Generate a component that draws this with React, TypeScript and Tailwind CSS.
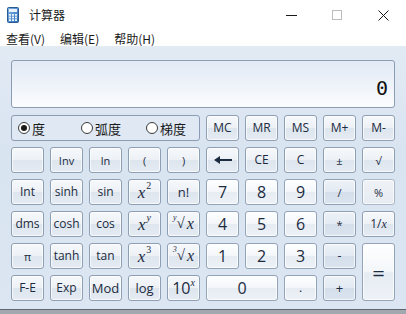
import React from "react";

type V = "fn" | "num" | "op" | "flat";

const base =
  "flex items-center justify-center rounded-[3px] border text-[#1c2b40] shadow-[inset_0_0_0_1px_rgba(255,255,255,0.7)]";

const variants: Record<V, string> = {
  fn: "border-[#8e9fb4] bg-[linear-gradient(to_bottom,#f6f8fb_0%,#edf1f6_48%,#dde5ee_52%,#e5ebf2_100%)]",
  num: "border-[#93a3b8] bg-[linear-gradient(to_bottom,#fdfeff_0%,#f4f7fa_48%,#e6ecf3_52%,#eef2f7_100%)]",
  op: "border-[#8e9fb4] bg-[linear-gradient(to_bottom,#edf2f7_0%,#e4eaf2_48%,#d4deea_52%,#dbe4ee_100%)]",
  flat: "border-[#a9b7c8] bg-[linear-gradient(to_bottom,#eef2f7_0%,#e7ecf2_100%)]",
};

function Btn({
  children,
  v = "fn",
  className = "",
  size = "text-[12px]",
}: {
  children?: React.ReactNode;
  v?: V;
  className?: string;
  size?: string;
}) {
  return (
    <div
      className={`${base} ${variants[v]} ${size} ${className} font-['Open_Sans','Noto_Sans',sans-serif] leading-none`}
    >
      {children}
    </div>
  );
}

const Ix = ({ children }: { children: React.ReactNode }) => (
  <span className="font-['Liberation_Serif',serif] italic">{children}</span>
);

function Pow({ b, e }: { b: React.ReactNode; e: React.ReactNode }) {
  return (
    <span className="flex items-start font-['Liberation_Serif',serif] text-[17px] leading-none">
      <span className="italic">{b}</span>
      <span className="text-[10px] -mt-[3px] ml-[1px]">{e}</span>
    </span>
  );
}

function Root({ n }: { n: React.ReactNode }) {
  return (
    <span className="flex items-start font-['Liberation_Serif',serif] leading-none">
      <span className="-mt-[2px] text-[8px] italic">{n}</span>
      <span className="text-[15px]">√</span>
      <span className="ml-[2px] text-[16px] italic">x</span>
    </span>
  );
}

function Radio({ on, label, className = "" }: { on?: boolean; label: string; className?: string }) {
  return (
    <div className={`flex items-center gap-[2px] ${className}`}>
      <span className="flex h-[12px] w-[12px] items-center justify-center rounded-full border border-[#3a3a3a] bg-white">
        {on && <span className="h-[6px] w-[6px] rounded-full bg-[#1a1a1a]" />}
      </span>
      <span className="text-[13px] leading-none text-[#1a1a1a]">{label}</span>
    </div>
  );
}

function CalcIcon() {
  return (
    <svg width="12" height="16" viewBox="0 0 12 16">
      <defs>
        <linearGradient id="cg" x1="0" y1="0" x2="1" y2="1">
          <stop offset="0" stopColor="#7fb2e6" />
          <stop offset="1" stopColor="#2f6eb5" />
        </linearGradient>
      </defs>
      <rect x="0.5" y="0.5" width="11" height="15" rx="1" fill="url(#cg)" stroke="#2a5a94" />
      <rect x="2" y="2" width="8" height="3" fill="#e8f1fa" />
      {[0, 1, 2].map((r) =>
        [0, 1, 2].map((c) => (
          <rect key={`${r}${c}`} x={2 + c * 3} y={7 + r * 2.6} width="2" height="1.8" fill="#eaf2fb" />
        ))
      )}
    </svg>
  );
}

export default function App() {
  return (
    <div className="flex h-[314px] w-[406px] flex-col overflow-hidden bg-white font-['Noto_Sans_CJK_SC','Noto_Sans',sans-serif]">
      {/* Title bar */}
      <div className="flex h-[30px] items-center">
        <div className="ml-[7px] mr-[10px] flex items-center">
          <CalcIcon />
        </div>
        <span className="text-[12px] text-[#1a1a1a]">计算器</span>
        <div className="ml-auto flex h-full items-center">
          <div className="flex w-[46px] items-center justify-center">
            <span className="h-px w-[11px] bg-[#1a1a1a]" />
          </div>
          <div className="flex w-[46px] items-center justify-center">
            <span className="h-[10px] w-[10px] border border-[#bcbcbc]" />
          </div>
          <div className="flex w-[46px] items-center justify-center">
            <svg width="11" height="11" viewBox="0 0 11 11">
              <path d="M0.5 0.5 L10.5 10.5 M10.5 0.5 L0.5 10.5" stroke="#1a1a1a" strokeWidth="1" />
            </svg>
          </div>
        </div>
      </div>
      {/* Menu */}
      <div className="flex h-[16px] items-center gap-[15px] px-[6px] pt-[2px] text-[12px] leading-none text-[#1a1a1a]">
        <span>查看(V)</span>
        <span>编辑(E)</span>
        <span>帮助(H)</span>
      </div>
      {/* Body */}
      <div className="flex flex-1 flex-col bg-[linear-gradient(to_bottom,#e2eaf4,#d9e4f1_40%,#dbe6f2)] px-[11px] pt-[14px]">
        <div className="flex h-[48px] items-end justify-end rounded-[3px] border border-[#8c9cb2] bg-[linear-gradient(to_bottom,#e2eaf6_0%,#edf2f9_45%,#fbfcfe_100%)] pb-[9px] pr-[6px]">
          <span className="font-['DejaVu_Sans_Mono',monospace] text-[20px] leading-none text-[#111]">0</span>
        </div>
        <div className="mt-[7px] grid grid-cols-[repeat(10,33px)] grid-rows-[repeat(6,26px)] gap-[6px]">
          <div className="col-span-5 flex items-center rounded-[3px] border border-[#8c9cb2] bg-[#dfe8f3] pl-[6px]">
            <Radio on label="度" />
            <Radio label="弧度" className="ml-[36px]" />
            <Radio label="梯度" className="ml-[25px]" />
          </div>
          <Btn>MC</Btn>
          <Btn>MR</Btn>
          <Btn>MS</Btn>
          <Btn>M+</Btn>
          <Btn>M-</Btn>

          <Btn />
          <Btn size="text-[11px]">Inv</Btn>
          <Btn size="text-[11px]">ln</Btn>
          <Btn size="text-[11px]">(</Btn>
          <Btn size="text-[11px]">)</Btn>
          <Btn>
            <svg width="18" height="8" viewBox="0 0 18 8">
              <path d="M0 4 L6 0 L6 8 Z" fill="#1c2b40" />
              <rect x="5" y="3" width="13" height="2" fill="#1c2b40" />
            </svg>
          </Btn>
          <Btn>CE</Btn>
          <Btn>C</Btn>
          <Btn size="text-[11px]">±</Btn>
          <Btn size="text-[11px]">√</Btn>

          <Btn>Int</Btn>
          <Btn>sinh</Btn>
          <Btn>sin</Btn>
          <Btn><Pow b="x" e="2" /></Btn>
          <Btn size="text-[13px]">n!</Btn>
          <Btn v="num" size="text-[16px]">7</Btn>
          <Btn v="num" size="text-[16px]">8</Btn>
          <Btn v="num" size="text-[16px]">9</Btn>
          <Btn v="op" size="text-[11px]">/</Btn>
          <Btn v="flat" size="text-[11px]">%</Btn>

          <Btn>dms</Btn>
          <Btn>cosh</Btn>
          <Btn>cos</Btn>
          <Btn><Pow b="x" e={<span className="italic">y</span>} /></Btn>
          <Btn><Root n="y" /></Btn>
          <Btn v="num" size="text-[16px]">4</Btn>
          <Btn v="num" size="text-[16px]">5</Btn>
          <Btn v="num" size="text-[16px]">6</Btn>
          <Btn v="op" size="text-[11px]">*</Btn>
          <Btn v="fn" size="text-[12px]">
            1/<Ix>x</Ix>
          </Btn>

          <Btn size="text-[11px]">π</Btn>
          <Btn>tanh</Btn>
          <Btn>tan</Btn>
          <Btn><Pow b="x" e="3" /></Btn>
          <Btn><Root n="3" /></Btn>
          <Btn v="num" size="text-[16px]">1</Btn>
          <Btn v="num" size="text-[16px]">2</Btn>
          <Btn v="num" size="text-[16px]">3</Btn>
          <Btn v="op" size="text-[12px]">-</Btn>
          <Btn v="num" className="row-span-2" size="text-[22px]">=</Btn>

          <Btn>F-E</Btn>
          <Btn>Exp</Btn>
          <Btn size="text-[13px]">Mod</Btn>
          <Btn size="text-[13px]">log</Btn>
          <Btn>
            <span className="flex items-start text-[16px] leading-none">
              10<span className="font-['Liberation_Serif',serif] text-[10px] italic -mt-[2px]">x</span>
            </span>
          </Btn>
          <Btn v="num" className="col-span-2" size="text-[16px]">0</Btn>
          <Btn v="num" size="text-[12px]">.</Btn>
          <Btn v="op" size="text-[13px]">+</Btn>
        </div>
        <div className="mt-auto h-[7px]" />
      </div>
      <div className="h-[5px] border-t border-[#5f6670] bg-[#a3a8af]" />
    </div>
  );
}
